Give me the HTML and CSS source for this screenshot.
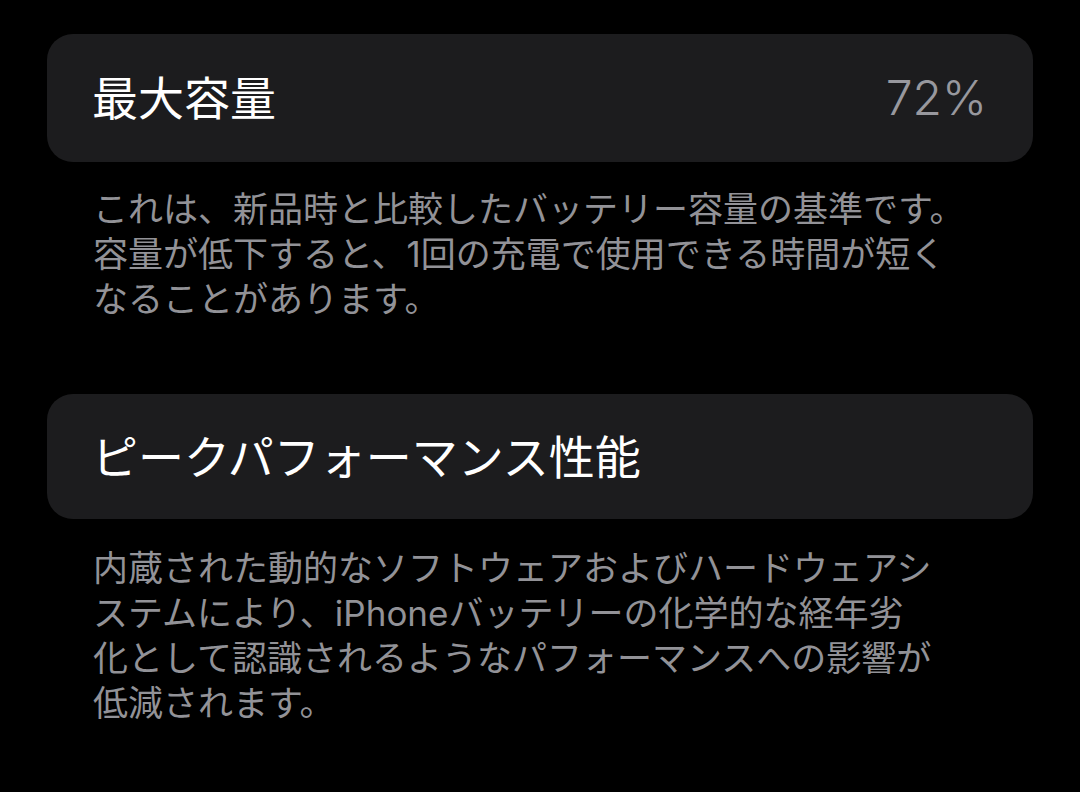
FILE: index.html
```html
<!DOCTYPE html>
<html lang="ja">
<head>
<meta charset="utf-8">
<link rel="stylesheet" href="styles.css">
</head>
<body>
<main class="page">
  <section class="group">
    <div class="card card-first">
      <span class="title">最大容量</span>
      <span class="value">72%</span>
    </div>
    <p class="note">これは、新品時と比較したバッテリー容量の基準です。<br>容量が低下すると、1回の充電で使用できる時間が短く<br>なることがあります。</p>
  </section>
  <section class="group">
    <div class="card card-second">
      <span class="title">ピークパフォーマンス性能</span>
    </div>
    <p class="note note-second">内蔵された動的なソフトウェアおよびハードウェアシ<br>ステムにより、iPhoneバッテリーの化学的な経年劣<br>化として認識されるようなパフォーマンスへの影響が<br>低減されます。</p>
  </section>
</main>
</body>
</html>
```
FILE: styles.css
```css
html, body {
  margin: 0;
  padding: 0;
  background: #000;
}
body {
  width: 1080px;
  height: 792px;
  overflow: hidden;
  font-family: Inter, "Noto Sans CJK JP", sans-serif;
}
.page {
  padding: 34px 47px 0 47px;
  display: flex;
  flex-direction: column;
  gap: 72px;
}
.group {
  display: flex;
  flex-direction: column;
}
.card {
  background: #1c1c1e;
  border-radius: 26px;
  display: flex;
  align-items: center;
  justify-content: space-between;
  padding: 0 46px 0 45px;
}
.card-first {
  height: 128px;
}
.card-second {
  height: 125px;
}
.title {
  color: #fff;
  font-size: 46px;
  line-height: 1;
}
.value {
  color: #98989e;
  font-size: 48px;
  font-weight: 300;
  line-height: 1;
}
.note {
  margin: 25px 0 0 0;
  padding-left: 46px;
  color: #929297;
  font-size: 35px;
  line-height: 45px;
}
.note-second {
  margin-top: 27px;
}
```
